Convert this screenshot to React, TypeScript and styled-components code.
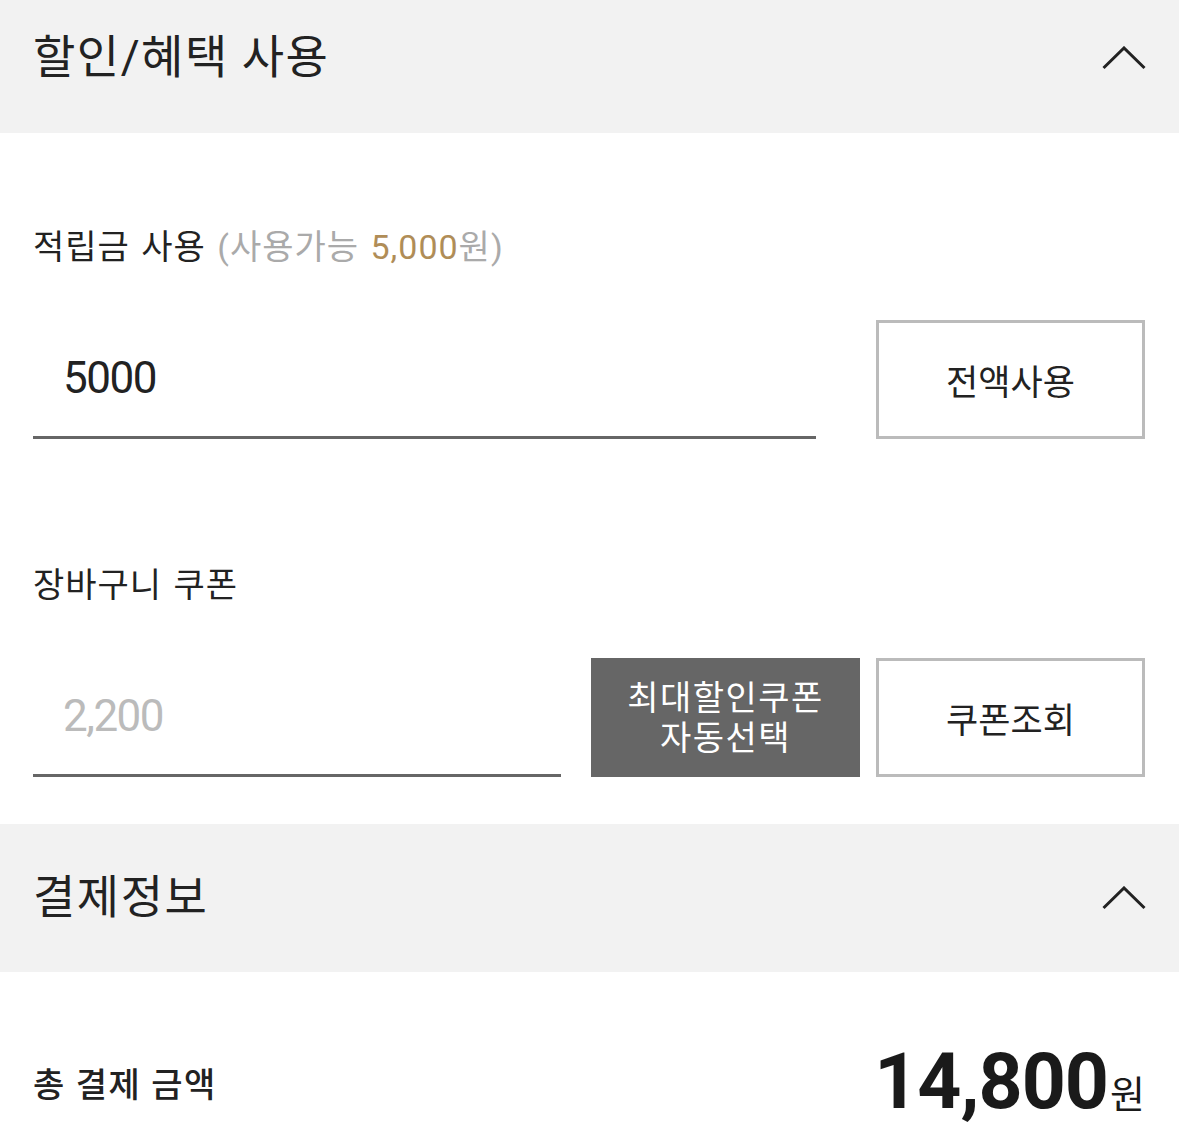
import styled, { createGlobalStyle } from 'styled-components';

const GlobalStyle = createGlobalStyle`
  html, body {
    margin: 0;
    padding: 0;
    background: #fff;
  }
  body {
    font-family: Roboto, "Noto Sans CJK KR", sans-serif;
    color: #222;
  }
  * {
    box-sizing: border-box;
  }
`;

const Page = styled.div`
  width: 1179px;
  height: 1132px;
  overflow: hidden;
`;

const SectionHeader = styled.div<{ $height: number; $shift?: number }>`
  height: ${(p) => p.$height}px;
  padding: 0 33px ${(p) => p.$shift || 0}px 33px;
  background: #f2f2f2;
  display: flex;
  align-items: center;
  justify-content: space-between;
`;

const HeaderTitle = styled.h2`
  margin: 0;
  font-size: 46px;
  font-weight: 400;
  line-height: 1.2;
  letter-spacing: 1.5px;
  color: #222;
`;

const Chevron = styled.svg`
  width: 44px;
  height: 24px;
`;

const Body = styled.div`
  padding: 95px 34px 47px 33px;
  display: flex;
  flex-direction: column;
`;

const Label = styled.div<{ $top?: number }>`
  margin-top: ${(p) => p.$top || 0}px;
  font-size: 34px;
  line-height: 38px;
  letter-spacing: 1px;
  word-spacing: 2px;
  color: #222;
`;

const Muted = styled.span`
  color: #aaa;
`;

const Gold = styled.span`
  color: #b08d57;
`;

const Row = styled.div`
  margin-top: 54px;
  height: 119px;
  display: flex;
  align-items: stretch;
`;

const AmountInput = styled.input<{ $gap: number }>`
  flex: 1;
  min-width: 0;
  margin-right: ${(p) => p.$gap}px;
  border: none;
  border-bottom: 3px solid #666;
  outline: none;
  background: transparent;
  padding: 0 0 0 30px;
  font-family: Roboto, "Noto Sans CJK KR", sans-serif;
  font-size: 44px;
  letter-spacing: -1.5px;
  color: #222;
  &::placeholder {
    color: #bbb;
  }
`;

const OutlineButton = styled.button`
  width: 269px;
  flex: none;
  background: #fff;
  border: 3px solid #bbb;
  font-family: Roboto, "Noto Sans CJK KR", sans-serif;
  font-size: 35px;
  letter-spacing: 0;
  color: #222;
  padding: 0;
`;

const DarkButton = styled.button`
  width: 269px;
  flex: none;
  margin-right: 16px;
  background: #666;
  border: none;
  font-family: Roboto, "Noto Sans CJK KR", sans-serif;
  font-size: 34px;
  line-height: 40px;
  letter-spacing: 1.5px;
  color: #fff;
  padding: 0;
`;

const TotalRow = styled.div`
  height: 159px;
  padding: 62px 34px 0 33px;
  display: flex;
  align-items: center;
  justify-content: space-between;
`;

const TotalLabel = styled.div`
  font-size: 34px;
  font-weight: 500;
  letter-spacing: 1.5px;
  color: #222;
`;

const TotalAmount = styled.div`
  display: flex;
  align-items: baseline;
  color: #1a1a1a;
`;

const TotalNumber = styled.span`
  font-size: 77px;
  font-weight: 700;
  line-height: 1;
  letter-spacing: -1px;
`;

const TotalUnit = styled.span`
  font-size: 38px;
  margin-left: 2px;
`;

function ChevronUp() {
  return (
    <Chevron viewBox="0 0 44 24">
      <polyline points="1.5,22 22,2 42.5,22" fill="none" stroke="#222" strokeWidth="3" />
    </Chevron>
  );
}

export default function App() {
  return (
    <Page>
      <GlobalStyle />
      <SectionHeader $height={133} $shift={18}>
        <HeaderTitle>할인/혜택 사용</HeaderTitle>
        <ChevronUp />
      </SectionHeader>
      <Body>
        <Label>
          적립금 사용 <Muted>(사용가능 <Gold>5,000</Gold>원)</Muted>
        </Label>
        <Row>
          <AmountInput $gap={60} defaultValue="5000" readOnly />
          <OutlineButton>전액사용</OutlineButton>
        </Row>
        <Label $top={127}>장바구니 쿠폰</Label>
        <Row>
          <AmountInput $gap={30} placeholder="2,200" readOnly />
          <DarkButton>
            최대할인쿠폰
            <br />
            자동선택
          </DarkButton>
          <OutlineButton>쿠폰조회</OutlineButton>
        </Row>
      </Body>
      <SectionHeader $height={148}>
        <HeaderTitle>결제정보</HeaderTitle>
        <ChevronUp />
      </SectionHeader>
      <TotalRow>
        <TotalLabel>총 결제 금액</TotalLabel>
        <TotalAmount>
          <TotalNumber>14,800</TotalNumber>
          <TotalUnit>원</TotalUnit>
        </TotalAmount>
      </TotalRow>
    </Page>
  );
}
